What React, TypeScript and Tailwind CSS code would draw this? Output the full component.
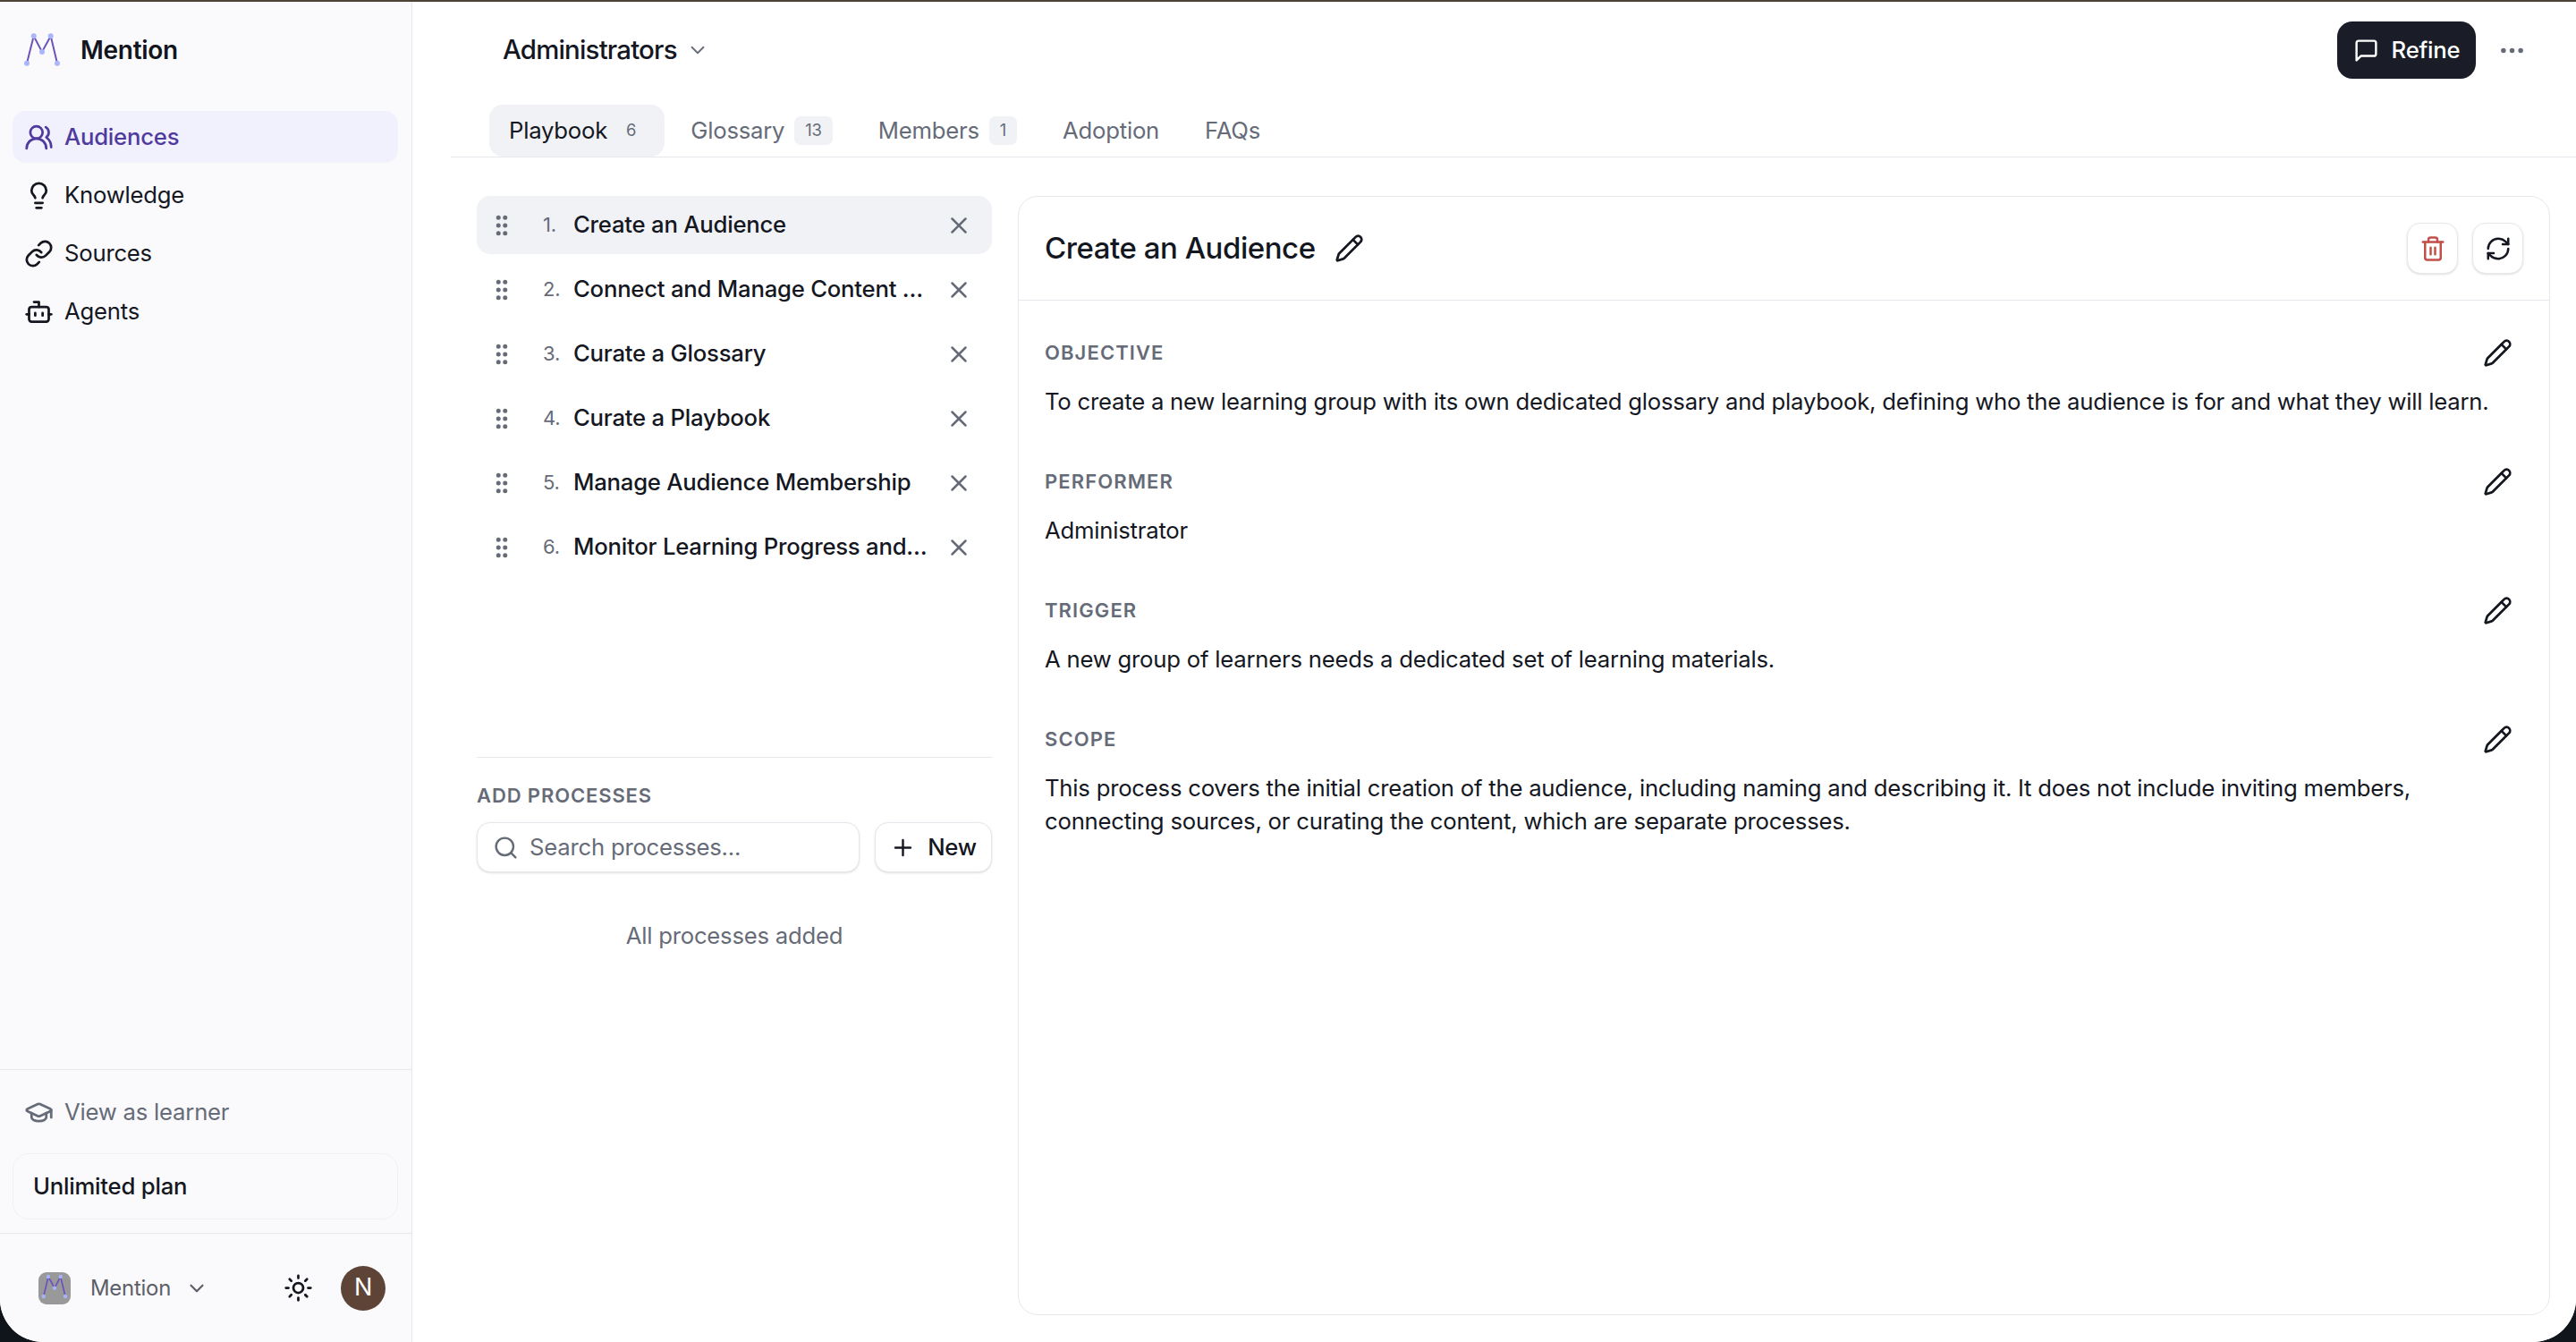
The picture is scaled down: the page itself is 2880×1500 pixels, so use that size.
import React from "react";
import {
  UsersRound,
  Lightbulb,
  Link,
  Bot,
  GraduationCap,
  ChevronDown,
  Sun,
  GripVertical,
  X,
  Plus,
  Search,
  Ellipsis,
  Pencil,
  Trash2,
  RefreshCw,
} from "lucide-react";

function Logo({ small }: { small?: boolean }) {
  if (small) {
    return (
      <svg width="36" height="36" viewBox="0 0 36 36" className="block">
        <path d="M5.7 27 11 5 18 17.7 24.7 5 30 27" fill="none" stroke="#6a4fc0" strokeWidth="1.6" />
        {[[5.7, 27], [11, 5], [18, 17.7], [24.7, 5], [30, 27]].map(([x, y]) => (
          <circle key={x} cx={x} cy={y} r="2.2" fill="#a5b4fc" />
        ))}
      </svg>
    );
  }
  return (
    <svg width="40" height="38" viewBox="0 0 40 38" className="block">
      <path d="M3 33.7 10.7 3.3 20 21 29.7 3.3 37 33.7" fill="none" stroke="#6d52b8" strokeWidth="2" />
      {[[3, 33.7], [10.7, 3.3], [20, 21], [29.7, 3.3], [37, 33.7]].map(([x, y]) => (
        <circle key={x} cx={x} cy={y} r="3" fill="#a9b6fb" />
      ))}
    </svg>
  );
}

const nav = [
  { label: "Audiences", Icon: UsersRound, active: true },
  { label: "Knowledge", Icon: Lightbulb },
  { label: "Sources", Icon: Link },
  { label: "Agents", Icon: Bot },
];

const processes = [
  "Create an Audience",
  "Connect and Manage Content Sources",
  "Curate a Glossary",
  "Curate a Playbook",
  "Manage Audience Membership",
  "Monitor Learning Progress and Adoption",
];

const sections = [
  {
    label: "OBJECTIVE",
    text: "To create a new learning group with its own dedicated glossary and playbook, defining who the audience is for and what they will learn.",
  },
  { label: "PERFORMER", text: "Administrator" },
  { label: "TRIGGER", text: "A new group of learners needs a dedicated set of learning materials." },
  {
    label: "SCOPE",
    text: "This process covers the initial creation of the audience, including naming and describing it. It does not include inviting members, connecting sources, or curating the content, which are separate processes.",
  },
];

function Sidebar() {
  return (
    <aside className="w-[461px] shrink-0 flex flex-col bg-[#fafafc] border-r border-[#e6e7ec]">
      <div className="h-[108px] flex items-center pl-[27px] gap-[23px]">
        <Logo />
        <span className="text-[28px] tracking-[-0.01em] font-semibold text-[#12151d] leading-none">Mention</span>
      </div>
      <nav className="pt-[14px] pl-[14px] pr-[15px] flex flex-col gap-[7px]">
        {nav.map(({ label, Icon, active }) => (
          <div
            key={label}
            className={
              active
                ? "h-[58px] pl-[13px] flex items-center gap-[12px] rounded-[15px] bg-[#f1f0fd] text-[#4f3a9e] font-medium text-[25.7px]"
                : "h-[58px] pl-[13px] flex items-center gap-[12px] rounded-[15px] text-[#14171f] text-[25.7px]"
            }
          >
            <Icon size={33} strokeWidth={2} className="shrink-0" />
            <span>{label}</span>
          </div>
        ))}
      </nav>
      <div className="flex-1" />
      <div className="border-t border-[#e6e7ec] pl-[14px] pr-[15px] pt-[18px] pb-[15px] flex flex-col gap-[17px]">
        <div className="h-[58px] pl-[13px] flex items-center gap-[12px] text-[#666b78] text-[25.7px]">
          <GraduationCap size={33} className="shrink-0" />
          <span>View as learner</span>
        </div>
        <div className="h-[74px] rounded-[18px] border border-[#f0f0f4] flex items-center pl-[22px] text-[25.7px] font-medium text-[#14171f]">
          Unlimited plan
        </div>
      </div>
      <div className="h-[122px] border-t border-[#e6e7ec] pl-[43px] pr-[29px] flex items-center justify-between">
        <div className="flex items-center">
          <div className="w-[36px] h-[36px] rounded-[9px] bg-[#999999]">
            <Logo small />
          </div>
          <span className="ml-[22px] text-[23.9px] text-[#5c5f68]">Mention</span>
          <ChevronDown size={26} strokeWidth={2} className="ml-[16px] text-[#5c5f68]" />
        </div>
        <div className="flex items-center gap-[31px]">
          <Sun size={33} className="text-[#14171f]" />
          <div className="w-[50px] h-[50px] rounded-full bg-[#5d4437] flex items-center justify-center text-white text-[27px]">
            N
          </div>
        </div>
      </div>
    </aside>
  );
}

function Tab({ label, count, active }: { label: string; count?: string; active?: boolean }) {
  return (
    <div
      className={
        active
          ? "h-[58px] px-[22px] flex items-center rounded-[15px] bg-[#f1f2f6] text-[#14171f] text-[25.7px]"
          : "h-[58px] px-[22px] flex items-center text-[#666b78] text-[25.7px]"
      }
    >
      <span>{label}</span>
      {count && (
        <span
          className={
            active
              ? "ml-[11px] h-[32px] px-[10px] rounded-[7px] flex items-center justify-center text-[18.4px] text-[#666b78]"
              : "ml-[11px] h-[32px] px-[12px] rounded-[7px] bg-[#f1f2f6] flex items-center justify-center text-[18.4px] text-[#666b78]"
          }
        >
          {count}
        </span>
      )}
    </div>
  );
}

function ProcessList() {
  return (
    <div className="w-[576px] shrink-0 flex flex-col">
      <div className="h-[627px] flex flex-col gap-[7px]">
        {processes.map((p, i) => (
          <div
            key={p}
            className={
              i === 0
                ? "h-[65px] shrink-0 pl-[13px] pr-[22px] flex items-center rounded-[15px] bg-[#f1f2f6]"
                : "h-[65px] shrink-0 pl-[13px] pr-[22px] flex items-center rounded-[15px]"
            }
          >
            <GripVertical size={30} className="shrink-0 text-[#666b78]" fill="#666b78" />
            <span className="ml-[31px] w-[34px] shrink-0 text-[22px] text-[#666b78]">{i + 1}.</span>
            <span className="flex-1 min-w-0 truncate text-[25.7px] font-medium text-[#14171f]">{p}</span>
            <X size={30} className="ml-[17px] shrink-0 text-[#666b78]" />
          </div>
        ))}
      </div>
      <div className="border-t border-[#e6e7ec] pt-[27px]">
        <div className="text-[22px] leading-[31px] font-semibold tracking-[0.04em] text-[#666b78]">ADD PROCESSES</div>
        <div className="mt-[14px] flex gap-[17px]">
          <div className="w-[428px] h-[56px] rounded-[15px] border border-[#e6e7ec] shadow-sm bg-white flex items-center pl-[17px] gap-[12px] text-[25.7px] text-[#666b78]">
            <Search size={29} className="shrink-0" />
            <span>Search processes...</span>
          </div>
          <div className="flex-1 h-[56px] rounded-[15px] border border-[#e6e7ec] shadow-sm bg-white flex items-center justify-center gap-[13px] text-[25.7px] font-medium text-[#14171f]">
            <Plus size={29} className="shrink-0" />
            <span>New</span>
          </div>
        </div>
        <div className="mt-[53px] text-center text-[25.7px] leading-[36.7px] text-[#666b78]">All processes added</div>
      </div>
    </div>
  );
}

function DetailPanel() {
  return (
    <section className="flex-1 min-w-0 rounded-[22px] border border-[#e6e7ec] bg-white flex flex-col">
      <header className="h-[116px] shrink-0 border-b border-[#e6e7ec] pl-[29px] pr-[29px] flex items-center justify-between">
        <div className="flex items-center gap-[21px]">
          <h1 className="text-[33px] tracking-[-0.014em] font-medium text-[#14171f]">Create an Audience</h1>
          <Pencil size={33} className="text-[#14171f]" />
        </div>
        <div className="flex items-center gap-[16px]">
          <button className="w-[57px] h-[57px] rounded-[15px] border border-[#e6e7ec] shadow-sm bg-white flex items-center justify-center text-[#c24f49]">
            <Trash2 size={30} />
          </button>
          <button className="w-[57px] h-[57px] rounded-[15px] border border-[#e6e7ec] shadow-sm bg-white flex items-center justify-center text-[#14171f]">
            <RefreshCw size={30} />
          </button>
        </div>
      </header>
      <div className="pt-[42px] pl-[29px] pr-[29px] flex flex-col gap-[54.4px]">
        {sections.map((s) => (
          <div key={s.label} className="flex flex-col gap-[20px]">
            <div className="h-[33px] pr-[12px] flex items-center justify-between">
              <span className="text-[22px] font-semibold tracking-[0.05em] text-[#666b78]">{s.label}</span>
              <Pencil size={33} className="text-[#14171f]" />
            </div>
            <p className="text-[25.7px] leading-[36.7px] text-[#14171f]">{s.text}</p>
          </div>
        ))}
      </div>
    </section>
  );
}

function Main() {
  return (
    <main className="flex-1 min-w-0 bg-white pl-[43px] flex flex-col">
      <div className="h-[108px] shrink-0 pl-[58px] pr-[55px] flex items-center justify-between">
        <div className="flex items-center gap-[10px]">
          <span className="text-[29.4px] tracking-[-0.027em] font-medium text-[#14171f]">Administrators</span>
          <ChevronDown size={26} className="text-[#666b78]" strokeWidth={1.7} />
        </div>
        <div className="flex items-center gap-[24px]">
          <button className="w-[155px] h-[64px] rounded-[17px] bg-[#1a1d27] text-white flex items-center justify-center gap-[14px] text-[25.7px] font-medium">
            <svg width="29" height="29" viewBox="0 0 24 24" fill="none" stroke="currentColor" strokeWidth="2" strokeLinecap="round" strokeLinejoin="round">
              <path d="M21 15a2 2 0 0 1-2 2H7l-4 4V5a2 2 0 0 1 2-2h14a2 2 0 0 1 2 2z" />
            </svg>
            <span>Refine</span>
          </button>
          <Ellipsis size={33} className="text-[#666b78]" />
        </div>
      </div>
      <div className="h-[66px] shrink-0 border-b border-[#e6e7ec] pl-[43px] pt-[7px] flex gap-[7px]">
        <Tab label="Playbook" count="6" active />
        <Tab label="Glossary" count="13" />
        <Tab label="Members" count="1" />
        <Tab label="Adoption" />
        <Tab label="FAQs" />
      </div>
      <div className="flex-1 min-h-0 pt-[43px] px-[29px] pb-[30px] flex gap-[29px]">
        <ProcessList />
        <DetailPanel />
      </div>
    </main>
  );
}

export default function App() {
  return (
    <div className="w-[2880px] h-[1500px] overflow-hidden flex flex-col bg-[#10151b] font-[Inter,sans-serif] tracking-[-0.014em]">
      <div className="h-[2px] shrink-0 bg-[#4d4236]" />
      <div className="flex-1 min-h-0 flex overflow-hidden rounded-b-[48px] bg-white">
        <Sidebar />
        <Main />
      </div>
    </div>
  );
}
